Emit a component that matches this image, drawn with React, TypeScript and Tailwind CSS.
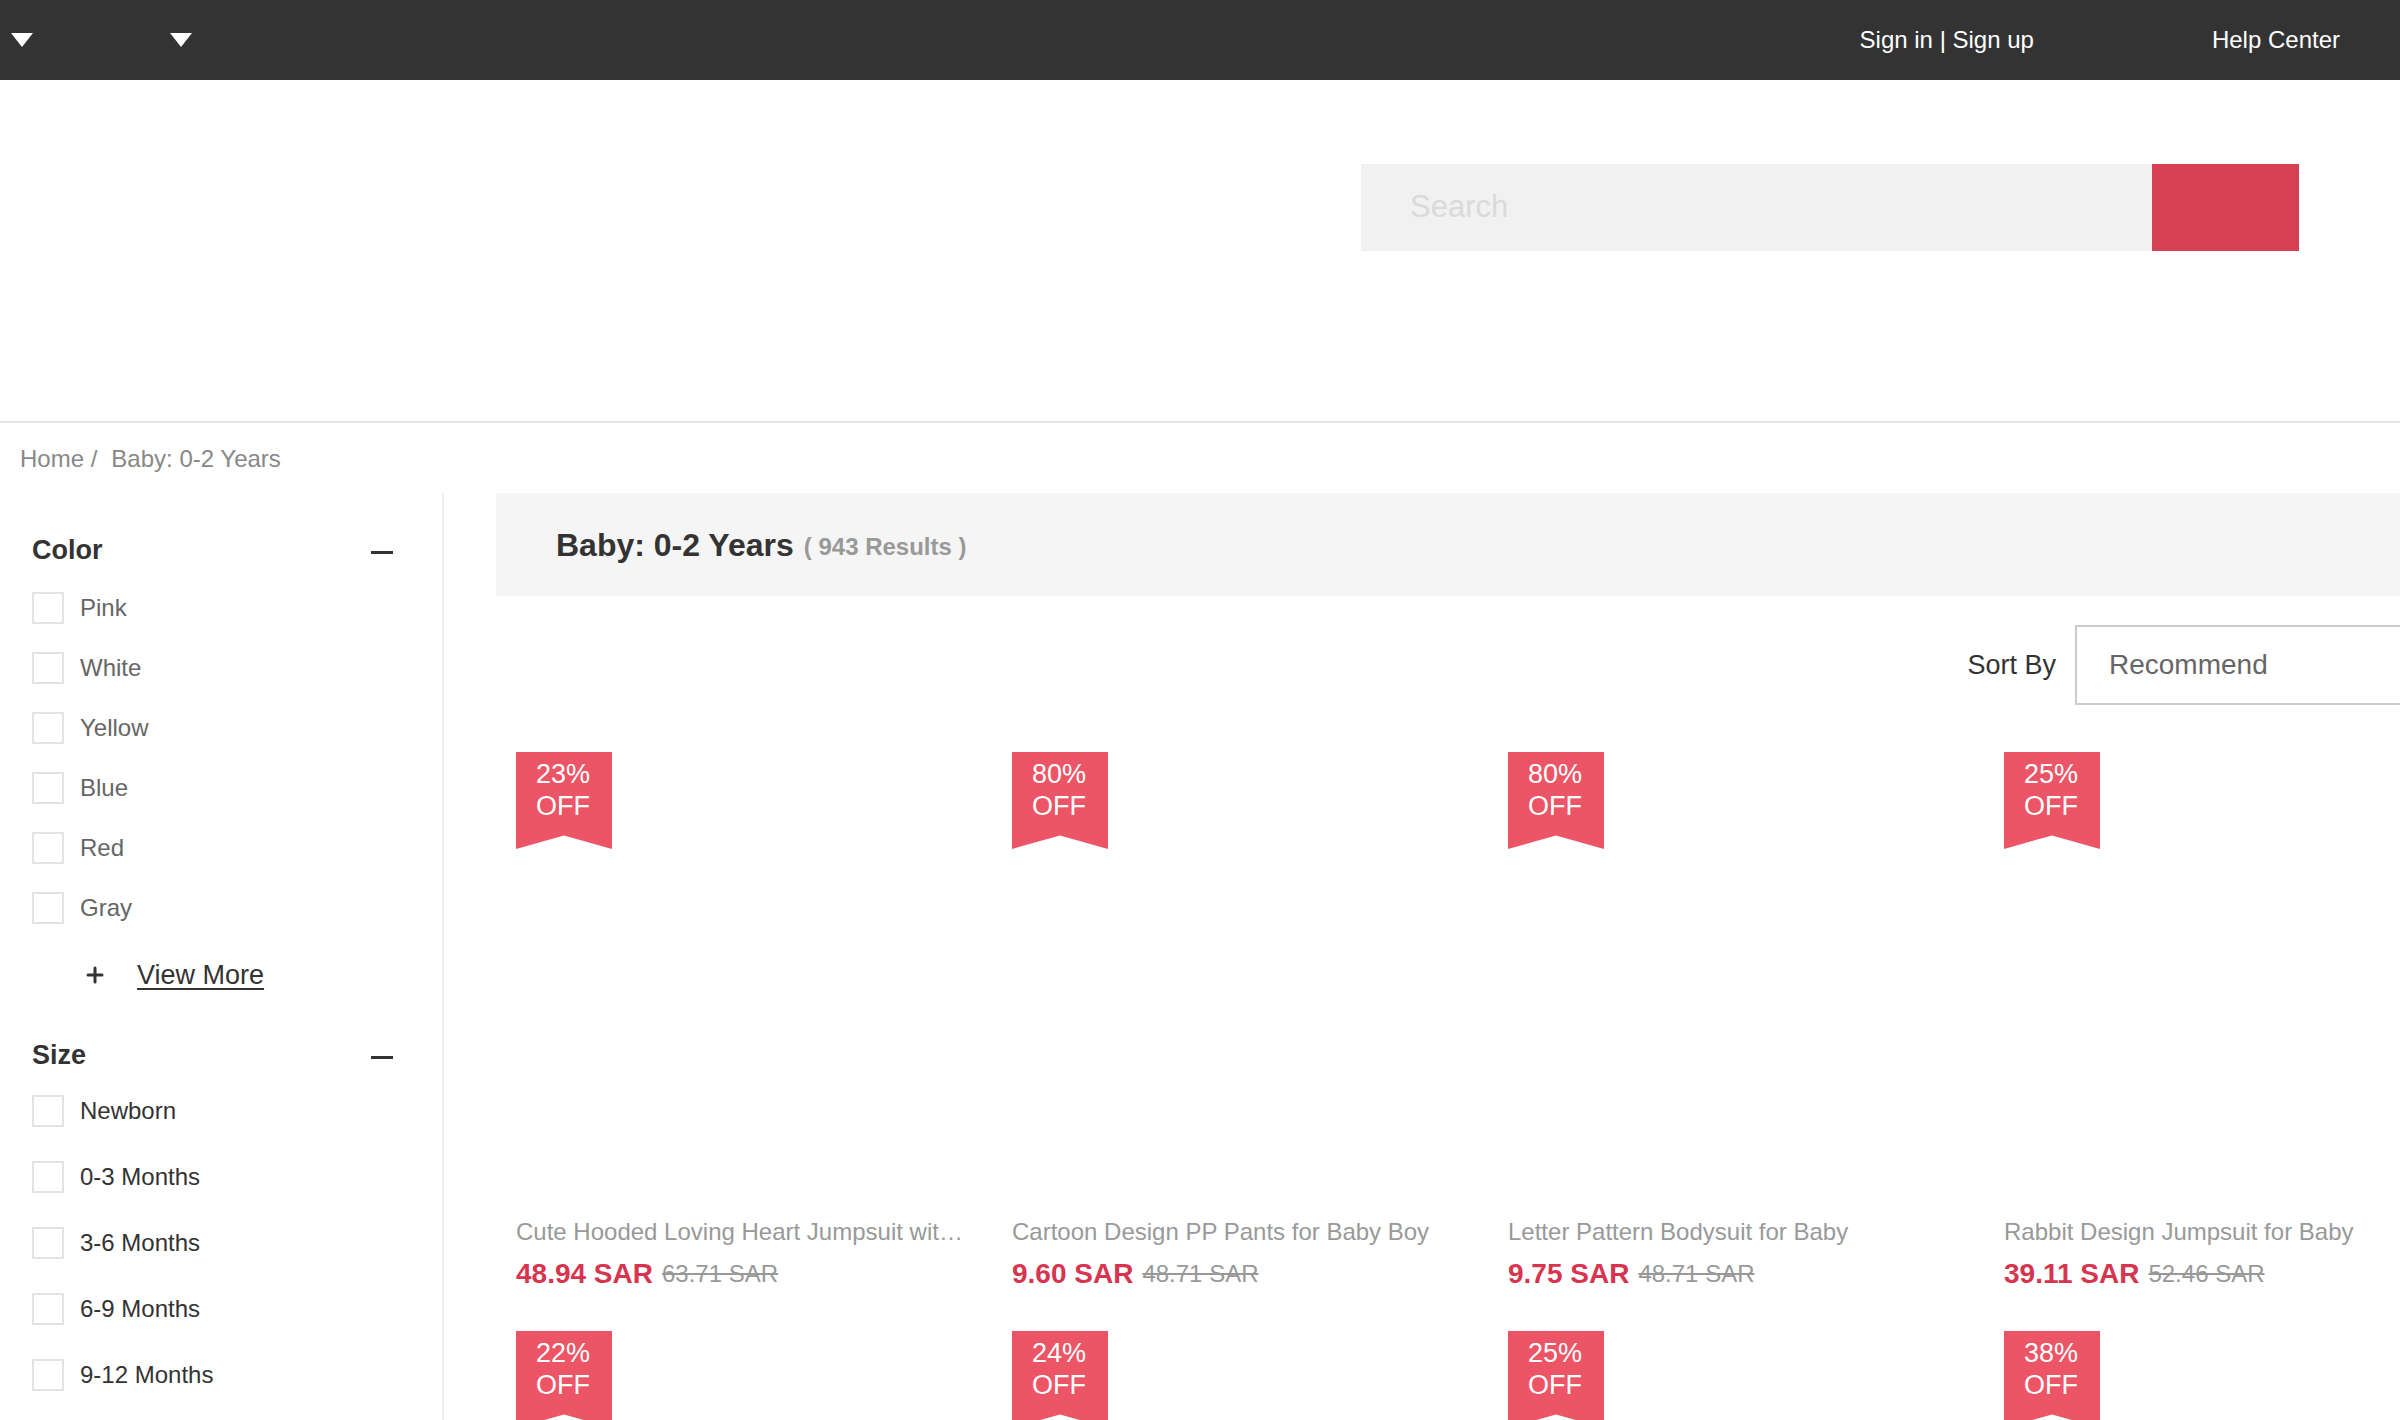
import { Plus } from 'lucide-react';

const colors = ['Pink', 'White', 'Yellow', 'Blue', 'Red', 'Gray'];
const sizes = ['Newborn', '0-3 Months', '3-6 Months', '6-9 Months', '9-12 Months'];

const products = [
    { off: '23%', name: 'Cute Hooded Loving Heart Jumpsuit with Ears for Baby', price: '48.94 SAR', old: '63.71 SAR' },
    { off: '80%', name: 'Cartoon Design PP Pants for Baby Boy', price: '9.60 SAR', old: '48.71 SAR' },
    { off: '80%', name: 'Letter Pattern Bodysuit for Baby', price: '9.75 SAR', old: '48.71 SAR' },
    { off: '25%', name: 'Rabbit Design Jumpsuit for Baby', price: '39.11 SAR', old: '52.46 SAR' },
    { off: '22%', name: 'Striped Romper for Baby', price: '31.20 SAR', old: '40.00 SAR' },
    { off: '24%', name: 'Cartoon Print Bodysuit for Baby', price: '27.36 SAR', old: '36.00 SAR' },
    { off: '25%', name: 'Bear Design Jumpsuit for Baby', price: '35.25 SAR', old: '47.00 SAR' },
    { off: '38%', name: 'Solid Color Hooded Coat for Baby', price: '45.88 SAR', old: '74.00 SAR' },
];

function Caret() {
    return (
        <svg width="22" height="14" viewBox="0 0 22 14" className="block">
            <polygon points="0,0 22,0 11,14" fill="#fff" />
        </svg>
    );
}

function Check({ label, dark }: { label: string; dark?: boolean }) {
    return (
        <div className="flex items-center gap-[16px]">
            <span className="w-[32px] h-[32px] border-2 border-[#e3e3e3] bg-white shrink-0"></span>
            <span className={dark ? 'text-[24px] text-[#333]' : 'text-[24px] text-[#666]'}>{label}</span>
        </div>
    );
}

function FilterHead({ title }: { title: string }) {
    return (
        <div className="h-[40px] flex items-center justify-between">
            <span className="text-[27px] font-bold text-[#333]">{title}</span>
            <span className="w-[22px] h-[3px] bg-[#333] mt-[4px]"></span>
        </div>
    );
}

function Card({ p }: { p: typeof products[number] }) {
    return (
        <div className="w-[454px]">
            <div className="relative h-[454px] bg-white">
                <div className="absolute left-0 top-0 w-[96px] h-[97px] bg-[#eb5566] text-white text-[27px] leading-[32px] pl-[20px] pt-[6px] [clip-path:polygon(0_0,100%_0,100%_100%,50%_86%,0_100%)]">
                    <div>{p.off}</div>
                    <div>OFF</div>
                </div>
            </div>
            <div className="mt-[11px] h-[30px] leading-[30px] text-[24px] text-[#999] truncate">{p.name}</div>
            <div className="mt-[9px] h-[36px] flex items-center gap-[9px]">
                <span className="text-[28px] font-bold text-[#d7354f]">{p.price}</span>
                <span className="text-[24px] text-[#999] line-through">{p.old}</span>
            </div>
        </div>
    );
}

export default function App() {
    return (
        <div className="w-[2400px] h-[1420px] overflow-hidden bg-white font-['Liberation_Sans',Arial,sans-serif]">
            {/* top bar */}
            <div className="h-[80px] bg-[#333] flex items-center text-white text-[24px]">
                <div className="ml-[11px]"><Caret /></div>
                <div className="ml-[137px]"><Caret /></div>
                <div className="ml-auto">Sign in | Sign up</div>
                <div className="ml-[178px] mr-[60px]">Help Center</div>
            </div>

            {/* header */}
            <div className="h-[343px] border-b-2 border-[#e6e6e6] flex justify-end pr-[101px] pt-[84px]">
                <div className="flex h-[87px]">
                    <div className="w-[791px] bg-[#f1f1f1] flex items-center pl-[49px] text-[31px] text-[#dadada]">Search</div>
                    <div className="w-[147px] bg-[#d54152]"></div>
                </div>
            </div>

            {/* breadcrumb */}
            <div className="h-[70px] flex items-center pl-[20px] pt-[2px] text-[24px] text-[#888]">
                <span>Home /</span>
                <span className="ml-[14px]">Baby: 0-2 Years</span>
            </div>

            <div className="flex">
                {/* sidebar */}
                <aside className="w-[444px] shrink-0 border-r-2 border-[#eee] h-[1000px] pl-[32px] pr-[49px] pt-[37px]">
                    <FilterHead title="Color" />
                    <div className="mt-[8px]">
                        {colors.map(c => (
                            <div key={c} className="h-[60px] flex items-center">
                                <Check label={c} />
                            </div>
                        ))}
                    </div>
                    <div className="h-[74px] flex items-center pl-[51px] gap-[30px] text-[#333]">
                        <Plus className="w-[24px] h-[24px]" strokeWidth={3} />
                        <span className="text-[27px] underline underline-offset-4">View More</span>
                    </div>
                    <div className="mt-[23px]">
                        <FilterHead title="Size" />
                    </div>
                    <div className="mt-[3px]">
                        {sizes.map(s => (
                            <div key={s} className="h-[66px] flex items-center">
                                <Check label={s} dark />
                            </div>
                        ))}
                    </div>
                </aside>

                {/* main */}
                <main className="ml-[52px] w-[2004px] shrink-0">
                    <div className="h-[103px] bg-[#f5f5f5] flex items-center pl-[60px]">
                        <span className="text-[32px] font-bold text-[#333]">Baby: 0-2 Years</span>
                        <span className="ml-[10px] text-[24px] font-bold text-[#999] mt-[4px]">( 943 Results )</span>
                    </div>
                    <div className="mt-[29px] flex items-center justify-end gap-[19px]">
                        <span className="text-[27px] text-[#333]">Sort By</span>
                        <div className="w-[425px] h-[80px] border-2 border-[#ccc] flex items-center pl-[32px] text-[28px] text-[#666]">Recommend</div>
                    </div>
                    <div className="mt-[47px] pl-[20px] grid grid-cols-[repeat(4,454px)] gap-x-[42px] gap-y-[39px]">
                        {products.map((p, i) => (
                            <Card key={i} p={p} />
                        ))}
                    </div>
                </main>
            </div>
        </div>
    );
}
